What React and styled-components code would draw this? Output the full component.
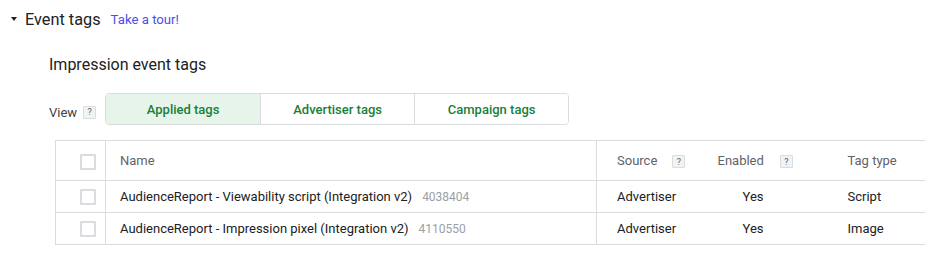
import styled, { createGlobalStyle } from "styled-components";

const GlobalStyle = createGlobalStyle`
  body {
    margin: 0;
    font-family: Roboto, "Liberation Sans", Arial, sans-serif;
    color: #202124;
    background: #fff;
    overflow: hidden;
  }
`;

const Page = styled.div`
  display: flex;
  flex-direction: column;
  width: 925px;
`;

const SectionHeader = styled.div`
  display: flex;
  align-items: center;
  height: 38px;
  padding-left: 11px;
`;

const Caret = styled.span`
  width: 0;
  height: 0;
  border-left: 3.5px solid transparent;
  border-right: 3.5px solid transparent;
  border-top: 4px solid #202124;
  margin-right: 8px;
`;

const Title = styled.h2`
  margin: 0;
  font-size: 16.3px;
  font-weight: 400;
  color: #202124;
`;

const TourLink = styled.a`
  margin-left: 10px;
  font-size: 13.2px;
  color: #4b4fe8;
  text-decoration: none;
`;

const Content = styled.div`
  padding-left: 49px;
  display: flex;
  flex-direction: column;
`;

const Subtitle = styled.h3`
  margin: 16px 0 0;
  font-size: 16px;
  font-weight: 400;
  line-height: 22px;
  color: #202124;
`;

const ViewRow = styled.div`
  display: flex;
  align-items: center;
  margin-top: 17px;
`;

const ViewLabel = styled.span`
  font-size: 13px;
  color: #3c4043;
  margin-top: 6px;
`;

const Help = styled.span`
  display: inline-flex;
  align-items: center;
  justify-content: center;
  width: 11px;
  height: 11px;
  border: 1px solid #dadce0;
  border-radius: 1px;
  background: #f1f3f4;
  font-size: 9px;
  color: #5f6368;
  margin-left: ${({ gap }) => gap || 6}px;
  margin-top: ${({ top }) => top || 0}px;
`;

const Tabs = styled.div`
  display: flex;
  margin-left: 9px;
  border: 1px solid #dadce0;
  border-radius: 4px;
  overflow: hidden;
`;

const Tab = styled.button`
  width: 154px;
  height: 30px;
  border: none;
  border-left: ${({ first }) => (first ? "none" : "1px solid #dadce0")};
  background: ${({ active }) => (active ? "#e6f4ea" : "#fff")};
  color: #188038;
  font-family: inherit;
  font-size: 13px;
  font-weight: 500;
  padding: 0;
  cursor: pointer;
`;

const TableWrap = styled.div`
  margin: 15px 0 0 6px;
`;

const Table = styled.table`
  border-collapse: collapse;
  width: 870px;
  table-layout: fixed;
  font-size: 13px;
`;

const Th = styled.th`
  height: 39px;
  text-align: left;
  font-weight: 400;
  color: #5f6368;
  padding: 0 0 0 ${({ pad }) => pad ?? 20}px;
  border-top: 1px solid #dadce0;
  border-bottom: 1px solid #dadce0;
  border-left: ${({ divider }) => (divider ? "1px solid #dadce0" : "none")};
  white-space: nowrap;
`;

const Td = styled.td`
  height: 31px;
  padding: 0 0 0 ${({ pad }) => pad ?? 20}px;
  color: #202124;
  font-size: 13px;
  border-bottom: 1px solid #dadce0;
  border-left: ${({ divider }) => (divider ? "1px solid #dadce0" : "none")};
  white-space: nowrap;
`;

const EdgeCell = styled.td`
  border-left: 1px solid #dadce0;
  border-bottom: 1px solid #dadce0;
  text-align: left;
  padding: 0 0 0 24px;
`;

const EdgeHead = styled.th`
  border-left: 1px solid #dadce0;
  border-top: 1px solid #dadce0;
  border-bottom: 1px solid #dadce0;
  text-align: left;
  padding: 0 0 0 24px;
`;

const Checkbox = styled.span`
  display: inline-block;
  width: 12px;
  height: 12px;
  border: 2px solid #dadce0;
  border-radius: 1px;
  vertical-align: middle;
  margin-top: ${({ head }) => (head ? 2 : 0)}px;
`;

const TagId = styled.span`
  margin-left: 10px;
  font-size: 12px;
  color: #9aa0a6;
`;

const rows = [
  { name: "AudienceReport - Viewability script (Integration v2)", id: "4038404", type: "Script" },
  { name: "AudienceReport - Impression pixel (Integration v2)", id: "4110550", type: "Image" },
];

export default function App() {
  return (
    <Page>
      <GlobalStyle />
      <SectionHeader>
        <Caret />
        <Title>Event tags</Title>
        <TourLink href="#">Take a tour!</TourLink>
      </SectionHeader>
      <Content>
        <Subtitle>Impression event tags</Subtitle>
        <ViewRow>
          <ViewLabel>View</ViewLabel>
          <Help top={6}>?</Help>
          <Tabs>
            <Tab first active>Applied tags</Tab>
            <Tab>Advertiser tags</Tab>
            <Tab>Campaign tags</Tab>
          </Tabs>
        </ViewRow>
        <TableWrap>
          <Table>
            <colgroup>
              <col style={{ width: 50 }} />
              <col style={{ width: 491 }} />
              <col style={{ width: 101 }} />
              <col style={{ width: 130 }} />
              <col />
            </colgroup>
            <thead>
              <tr>
                <EdgeHead>
                  <Checkbox head />
                </EdgeHead>
                <Th divider pad={14}>Name</Th>
                <Th divider pad={20}>
                  Source
                  <Help gap={15}>?</Help>
                </Th>
                <Th pad={20}>
                  Enabled
                  <Help gap={16}>?</Help>
                </Th>
                <Th pad={20}>Tag type</Th>
              </tr>
            </thead>
            <tbody>
              {rows.map((r) => (
                <tr key={r.id}>
                  <EdgeCell>
                    <Checkbox />
                  </EdgeCell>
                  <Td divider pad={14}>
                    {r.name}
                    <TagId>{r.id}</TagId>
                  </Td>
                  <Td divider pad={20}>Advertiser</Td>
                  <Td pad={45}>Yes</Td>
                  <Td pad={20}>{r.type}</Td>
                </tr>
              ))}
            </tbody>
          </Table>
        </TableWrap>
      </Content>
    </Page>
  );
}
